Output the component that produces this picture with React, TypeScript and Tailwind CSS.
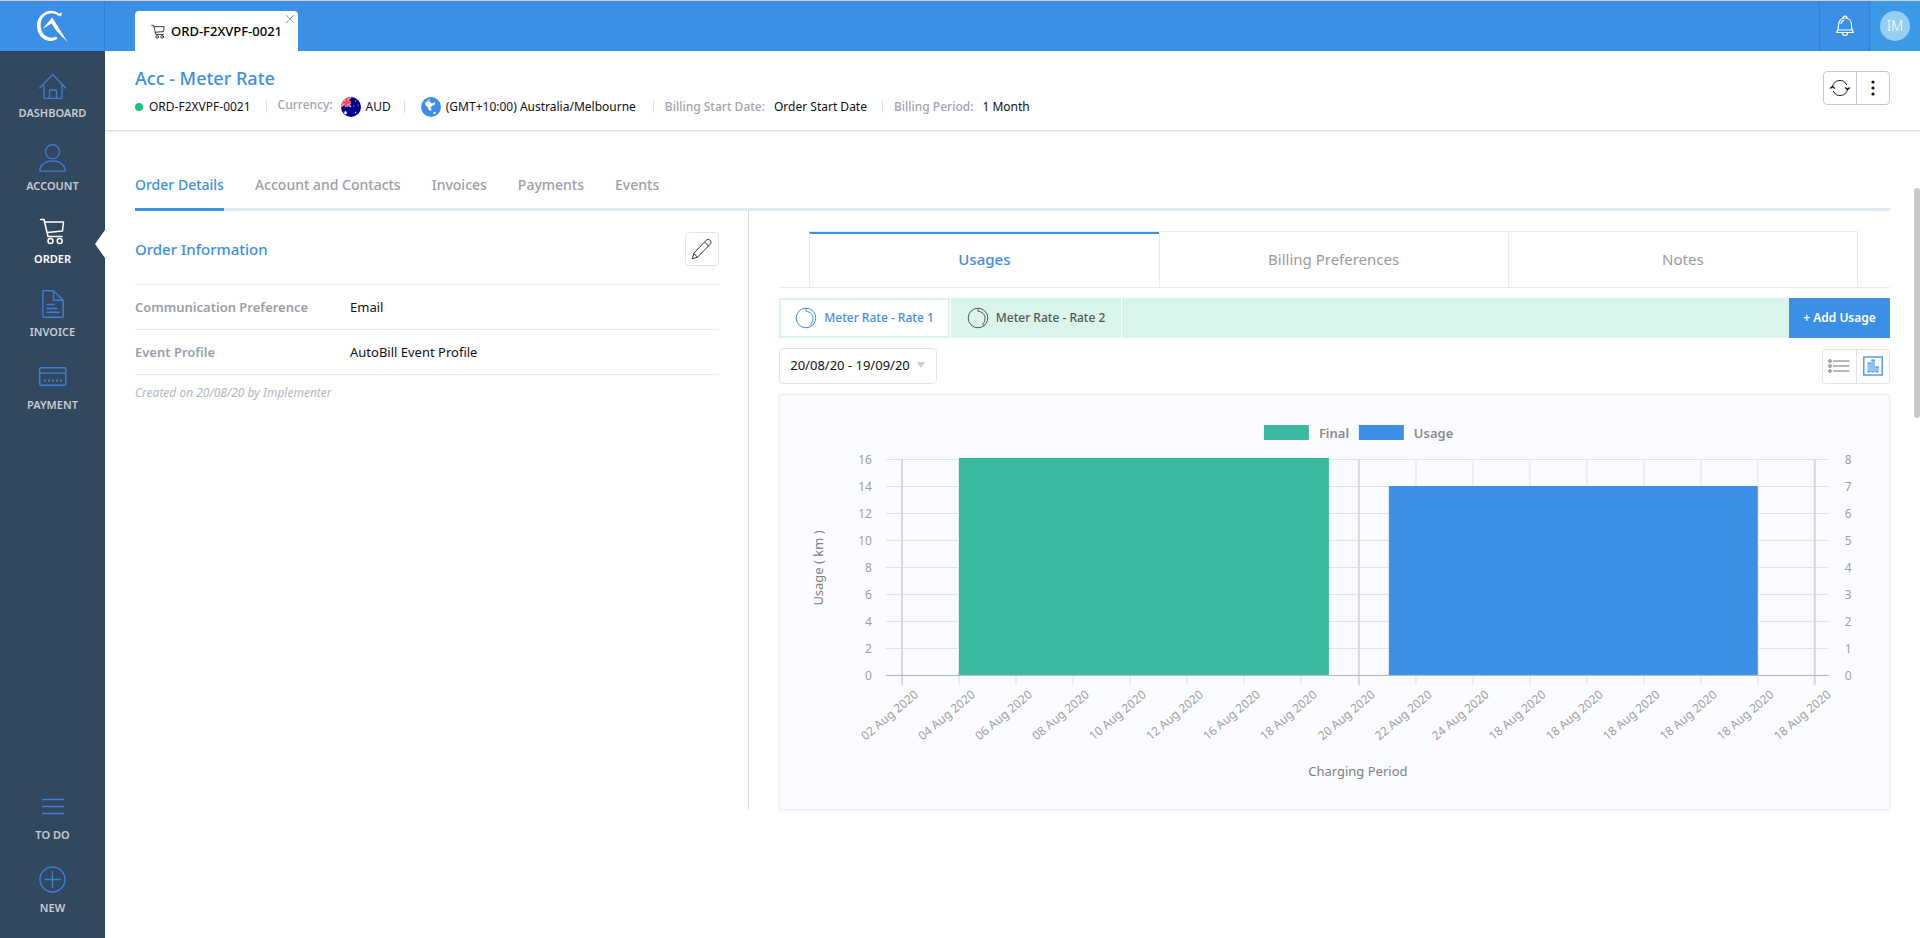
import { useState } from 'react';
import type { ReactNode } from 'react';

const BLUE = '#3c8fe6';

function HouseIcon() {
  return (
    <svg width="28" height="28" viewBox="0 0 28 28" fill="none" stroke="currentColor" strokeWidth="1.3" strokeLinecap="round" strokeLinejoin="round">
      <path d="M.7 17 13.700 3.500 26.700 17M5 14V26a1.500 1.500 0 0 0 1.500 1.500h15A1.500 1.500 0 0 0 23 26V14M10.500 27.500V20a1 1 0 0 1 1-1h5a1 1 0 0 1 1 1v7.500" />
    </svg>
  );
}

function PersonIcon() {
  return (
    <svg width="28" height="28" viewBox="0 0 28 28" fill="none" stroke="currentColor" strokeWidth="1.3">
      <circle cx="13.500" cy="7.700" r="7" />
      <path d="M2 27.200h23a1.200 1.200 0 0 0 1.200-1.300C25.500 20.200 20 16.900 13.500 16.900S1.500 20.200.8 25.900A1.200 1.200 0 0 0 2 27.200z" />
    </svg>
  );
}

function CartIcon({ size = 28, width = 1.5 }: { size?: number; width?: number }) {
  return (
    <svg width={size} height={size} viewBox="0 0 28 28" fill="none" stroke="currentColor" strokeWidth={width} strokeLinecap="round" strokeLinejoin="round">
      <path d="M1.500 2.500H5L9 19.500H23M5.700 5H24.500L23.500 14 8 15.500" />
      <circle cx="11.500" cy="24" r="2.500" />
      <circle cx="20.700" cy="24" r="2.500" />
    </svg>
  );
}

function DocumentIcon() {
  return (
    <svg width="28" height="28" viewBox="0 0 28 28" fill="none" stroke="currentColor" strokeWidth="1.400" strokeLinejoin="round">
      <path d="M14.500 .8H5A1.200 1.200 0 0 0 3.800 2v24A1.200 1.200 0 0 0 5 27.200h18a1.200 1.200 0 0 0 1.200-1.200V10.200zV10.200h9.700M7.500 14.500h8M7.500 18.500h11M7.500 22.300h13" />
    </svg>
  );
}

function CardIcon() {
  return (
    <svg width="28" height="28" viewBox="0 0 28 28" fill="none" stroke="currentColor" strokeWidth="1.400">
      <rect x=".8" y="4.700" width="26" height="17.500" rx="1" />
      <path d="M1 10h26" />
      <path d="M5 17.500h18" strokeWidth="2" strokeDasharray="2 2" />
    </svg>
  );
}

function LinesIcon() {
  return (
    <svg width="28" height="28" viewBox="0 0 28 28" fill="none" stroke="currentColor" strokeWidth="1.400">
      <path d="M3 6.500h22M3 13.500h22M3 20.500h22" />
    </svg>
  );
}

function PlusIcon() {
  return (
    <svg width="28" height="28" viewBox="0 0 28 28" fill="none" stroke="currentColor" strokeWidth="1.400">
      <circle cx="13.500" cy="13.500" r="12.500" />
      <path d="M5 13.500h17M13.500 5v17" />
    </svg>
  );
}

function LogoIcon() {
  return (
    <svg width="34" height="34" viewBox="0 0 34 34" fill="none">
      <path d="M26 7.500 27 3.500 24 4.500C20 1.200 14.500 .8 10 3.200 4.500 6.200 1.500 11.500 2 18c.6 8.500 7 14 13.500 14 3 0 5.500-1 7-2.800l-1.500-1.700C19 28.500 17.500 29 15 28.500 10 27.700 6 23.500 5.700 17.500 5.300 12 7.500 7.500 12 5.300c3.700-1.800 8-1.500 11 1.200z" fill="#fff" />
      <path d="M7.500 20 17.200 8.500 32.500 33 21.500 22 16.500 14.500z" fill="#fff" />
    </svg>
  );
}

function BellIcon() {
  return (
    <svg width="20" height="22" viewBox="0 0 20 22" fill="none" stroke="#fff" strokeWidth="1.200" strokeLinejoin="round">
      <path d="M8 3a2 1.800 0 0 1 4 0M1 17.500h18M1.500 17c2-1.500 2-3.500 2-7C3.500 5.500 6.500 3 10 3s6.500 2.500 6.500 7c0 3.500 0 5.500 2 7M3 15h14M7.500 18a2.500 2.500 0 0 0 5 0M6 9c.2-2.300 1.500-3.500 3.200-3.700" />
    </svg>
  );
}

function FlagIcon() {
  return (
    <svg width="20" height="20" viewBox="0 0 20 20">
      <defs>
        <clipPath id="flag-round">
          <circle cx="10" cy="10" r="10" />
        </clipPath>
      </defs>
      <g clipPath="url(#flag-round)">
        <rect width="20" height="20" fill="#00008b" />
        <path d="M0 0 10 10M10 0 0 10" stroke="#f3b6c4" strokeWidth="1.600" />
        <path d="M5.500 0v10M0 5.500h10" stroke="#ff8f96" strokeWidth="3.600" />
        <path d="M5.500 0v10M0 5.500h10" stroke="#ff4048" strokeWidth="2" />
        <g fill="#e6e6ff">
          <path d="m4.500 13.500.6 1.200 1.300-.2-.7 1.200.7 1.200-1.300-.2-.6 1.200-.5-1.200-1.400.2.800-1.200-.800-1.200 1.400.2z" />
          <circle cx="14.500" cy="4" r=".6" />
          <circle cx="17" cy="8" r=".6" />
          <circle cx="12.500" cy="9" r=".6" />
          <circle cx="14.500" cy="15.500" r=".7" />
        </g>
      </g>
    </svg>
  );
}

function GlobeIcon() {
  return (
    <svg width="20" height="20" viewBox="0 0 20 20">
      <circle cx="10" cy="10" r="10" fill={BLUE} />
      <path d="M4 5.500 6.500 4l3 .7 1 1.800L12.500 6l1.700-1.500L13.500 8l-2.500.800L9.500 11l1.200 1.500-1 1.500L7.500 12.700l-.8-2.700L4.500 8.500zM12 15.700l3-.9-1 2.300h-1.500zM6 3.200 8.500 2l.5 1.500z" fill="#fff" />
    </svg>
  );
}

function RefreshIcon() {
  return (
    <svg width="20" height="18" viewBox="0 0 20 18" fill="none" stroke="#1c1c1c" strokeWidth="1">
      <path d="M2.500 8A7.500 7.500 0 0 1 16.800 6M17.500 10A7.500 7.500 0 0 1 3.200 12" />
      <path d="m.3 9.500 2.200-2 2.200 2M15.300 8.500l2.200 2 2.200-2" strokeWidth="1.500" />
    </svg>
  );
}

function DotsIcon() {
  return (
    <svg width="4" height="16" viewBox="0 0 4 16" fill="#111">
      <circle cx="2" cy="2" r="1.600" />
      <circle cx="2" cy="8" r="1.600" />
      <circle cx="2" cy="14" r="1.600" />
    </svg>
  );
}

function PencilIcon() {
  return (
    <svg width="22" height="22" viewBox="0 0 22 22" fill="none" stroke="#333" strokeWidth="1" strokeLinejoin="round">
      <path d="m1.200 20.800 1.600-5.500L15.200 2.200c1.200-1.200 2.800-1.100 3.900 0s1.300 2.800.1 4L6.500 19.200zM13.500 4l4.200 4.200M2.800 15.300l3.700 3.900" />
    </svg>
  );
}

function DialIcon() {
  return (
    <svg width="22" height="22" viewBox="0 0 22 22" fill="none" stroke="currentColor" strokeWidth="1">
      <circle cx="11" cy="11" r="9.800" />
      <path d="M11 1.200V4.300c4.200.3 7 3.200 7 6.900 0 2.800-1 4.800-2.500 6.300l1.700 1.200" />
    </svg>
  );
}

function ListIcon() {
  return (
    <svg width="22" height="14" viewBox="0 0 22 14" fill="none" stroke="#777" strokeWidth="1.100">
      <path d="M5 2h16.500M5 7h16.500M5 12h16.500" />
      <circle cx="2" cy="2" r="1.200" />
      <circle cx="2" cy="7" r="1.200" />
      <circle cx="2" cy="12" r="1.200" />
    </svg>
  );
}

function BarsIcon() {
  return (
    <svg width="20" height="20" viewBox="0 0 20 20" fill="none" stroke={BLUE} strokeWidth="1.300">
      <rect x=".8" y="1" width="18.400" height="18" />
      <path d="M4.500 16V7h3.800v9zM8.300 16V4h3.800v12zM12.100 16v-5h3.800v5z" fill="#93c1f1" stroke="none" />
      <path d="M4.500 7h3.800M8.300 4h3.800M12.100 11h3.800" strokeWidth="1" />
      <path d="M4.500 16h11.400" strokeWidth="1" strokeDasharray="2.500 1.500" />
    </svg>
  );
}

const mainNav = [
  { label: 'DASHBOARD', icon: <HouseIcon /> },
  { label: 'ACCOUNT', icon: <PersonIcon /> },
  { label: 'ORDER', icon: <CartIcon />, active: true },
  { label: 'INVOICE', icon: <DocumentIcon /> },
  { label: 'PAYMENT', icon: <CardIcon /> },
];

const bottomNav = [
  { label: 'TO DO', icon: <LinesIcon /> },
  { label: 'NEW', icon: <PlusIcon /> },
];

function NavItem({ label, icon, active }: { label: string; icon: ReactNode; active?: boolean }) {
  return (
    <a href="#" className={`relative flex h-[73px] flex-col items-center pt-[9px] ${active ? 'text-white' : 'text-[#3c7fd8]'}`}>
      {icon}
      <span className={`mt-1.5 text-[11px] leading-4 font-semibold ${active ? 'text-white' : 'text-[#c5cbd2]'}`}>{label}</span>
      {active && (
        <svg className="absolute top-[22px] right-0" width="10" height="28" viewBox="0 0 10 28" fill="#fff">
          <path d="M10 0 0 14l10 14z" />
        </svg>
      )}
    </a>
  );
}

function Divider() {
  return <span className="h-3 w-px bg-[#dcdce4]" />;
}

const pageTabs = ['Order Details', 'Account and Contacts', 'Invoices', 'Payments', 'Events'];
const usageTabs = ['Usages', 'Billing Preferences', 'Notes'];
const meters = ['Meter Rate - Rate 1', 'Meter Rate - Rate 2'];

const dates = ['02', '04', '06', '08', '10', '12', '16', '18', '20', '22', '24', '18', '18', '18', '18', '18', '18'];

function UsageChart() {
  const left = 122;
  const right = 1035;
  const top = 64;
  const bottom = 280;
  const x = (i: number) => Math.round(left + ((right - left) / 16) * i);
  const y = (i: number) => bottom - 27 * i;
  const rows = [0, 1, 2, 3, 4, 5, 6, 7, 8];

  return (
    <svg viewBox="0 0 1109 414" className="block w-full" role="img" aria-label="Usage by charging period">
      <rect x="484" y="30" width="45" height="15" fill="#3bb8a0" />
      <rect x="579" y="30" width="45" height="15" fill={BLUE} />
      <g fontSize="13" fontWeight="600" fill="#8c8c8c">
        <text x="539" y="43">Final</text>
        <text x="634" y="43">Usage</text>
      </g>
      {rows.slice(1).map((r) => (
        <rect key={r} x="106" y={y(r)} width="943" height="1" fill="#e0e2e6" />
      ))}
      {dates.map((_, i) => (
        <rect key={i} x={x(i) - 1} y={top} width="2" height={bottom - top + 10} fill={i % 8 === 0 ? '#d6d8dc' : '#ebedf1'} />
      ))}
      <rect x="106" y={bottom} width="943" height="1" fill="#b0b2b6" />
      <rect x="179" y="63" width="370" height="217" fill="#3bb8a0" />
      <rect x="609" y="91" width="369" height="189" fill={BLUE} />
      <g fontSize="12" fill="#9f9f9f">
        {rows.map((r) => (
          <text key={r} x="92" y={y(r) + 5} textAnchor="end">{r * 2}</text>
        ))}
        {rows.map((r) => (
          <text key={r} x="1065" y={y(r) + 5}>{r}</text>
        ))}
        {dates.map((d, i) => (
          <text key={i} x={x(i) + 17} y="301" textAnchor="end" transform={`rotate(-40 ${x(i) + 17} 301)`}>{d} Aug 2020</text>
        ))}
      </g>
      <g fontSize="13" fill="#808080" textAnchor="middle">
        <text x="43" y="173" transform="rotate(-90 43 173)">Usage ( km )</text>
        <text x="578" y="381">Charging Period</text>
      </g>
    </svg>
  );
}

export default function App() {
  const [tab, setTab] = useState('Order Details');
  const [usageTab, setUsageTab] = useState('Usages');
  const [meter, setMeter] = useState(meters[0]);

  return (
    <div className="flex min-h-screen flex-col bg-white font-['Noto_Sans','Open_Sans',sans-serif] text-[#111]">
      <header className="flex h-[51px] border-t border-[#d0d0d0] bg-[#3c8fe6]">
        <a href="#" aria-label="Home" className="flex w-[105px] items-center justify-center border-r border-[#377fd0]">
          <LogoIcon />
        </a>
        <div className="flex flex-1 items-end pl-[30px]">
          <div className="relative flex h-10 items-center gap-[5px] rounded-t bg-white px-4">
            <CartIcon size={15} width={1.5} />
            <a href="#" className="text-[13px] leading-5 font-medium text-black">ORD-F2XVPF-0021</a>
            <button aria-label="Close tab" className="absolute top-1 right-1">
              <svg width="8" height="8" viewBox="0 0 8 8" stroke="#999" strokeWidth="1">
                <path d="m0 0 8 8M8 0 0 8" />
              </svg>
            </button>
          </div>
        </div>
        <button aria-label="Notifications" className="flex w-[51px] items-center justify-center border-x border-[#377fd0]">
          <BellIcon />
        </button>
        <button className="flex w-[50px] items-center justify-center bg-[#3a9ae6]">
          <span className="size-[30px] rounded-full bg-[#97cff3] text-sm leading-[30px] font-light text-white">IM</span>
        </button>
      </header>

      <div className="flex flex-1">
        <nav className="flex w-[105px] shrink-0 flex-col justify-between bg-[#32485e] pt-[11px] pb-2">
          <div>
            {mainNav.map((item) => (
              <NavItem key={item.label} {...item} />
            ))}
          </div>
          <div>
            {bottomNav.map((item) => (
              <NavItem key={item.label} {...item} />
            ))}
          </div>
        </nav>

        <main className="min-w-0 flex-1">
          <section className="flex h-20 items-start justify-between border-b border-[#d5dce3] px-[30px] shadow-[0_1px_3px_rgba(0,0,0,0.08)]">
            <div className="pt-[15px]">
              <h1 className="text-lg leading-6 font-medium text-[#3c8fe6]">Acc - Meter Rate</h1>
              <div className="mt-[7px] flex h-5 items-center text-xs">
                <span className="mr-1.5 size-2 rounded-full bg-[#12c878]" />
                <span className="mr-[15px]">ORD-F2XVPF-0021</span>
                <Divider />
                <span className="mr-2 ml-[11px] pb-1 font-medium text-[#a3a3b2]">Currency:</span>
                <FlagIcon />
                <span className="mr-[13px] ml-[5px]">AUD</span>
                <Divider />
                <span className="mr-[5px] ml-4">
                  <GlobeIcon />
                </span>
                <span className="mr-[17px]">(GMT+10:00) Australia/Melbourne</span>
                <Divider />
                <span className="mr-[9px] ml-[11px] font-medium text-[#a3a3b2]">Billing Start Date:</span>
                <span className="mr-[15px]">Order Start Date</span>
                <Divider />
                <span className="mr-[9px] ml-[11px] font-medium text-[#a3a3b2]">Billing Period:</span>
                <span>1 Month</span>
              </div>
            </div>
            <div className="mt-5 flex h-[34px] w-[67px] rounded border border-[#c3c6d4]">
              <button aria-label="Refresh" className="flex flex-1 items-center justify-center border-r border-[#c3c6d4]">
                <RefreshIcon />
              </button>
              <button aria-label="More actions" className="flex flex-1 items-center justify-center">
                <DotsIcon />
              </button>
            </div>
          </section>

          <div className="px-[30px] pt-11">
            <div className="flex gap-[31px] border-b-3 border-[#e3e9f4]">
              {pageTabs.map((name) => (
                <button
                  key={name}
                  onClick={() => setTab(name)}
                  className={`-mb-[3px] border-b-3 pb-[13px] text-sm leading-5 font-medium ${tab === name ? 'border-[#3c8fe6] text-[#3c8fe6]' : 'border-transparent text-[#9aa0a8]'}`}
                >
                  {name}
                </button>
              ))}
            </div>

            <div className="flex">
              <section className="w-[35%] shrink-0 border-r border-[#d3dae3] pt-[21px] pr-[29px]">
                <div className="flex items-center justify-between border-b border-[#eaeaea] pb-[18px]">
                  <h2 className="text-[15px] font-medium text-[#3c8fe6]">Order Information</h2>
                  <button aria-label="Edit order information" className="flex size-[34px] items-center justify-center rounded-sm border border-[#e4e4e4]">
                    <PencilIcon />
                  </button>
                </div>
                <dl className="text-[13px]">
                  <div className="flex h-[45px] items-center border-b border-[#eaeaea] pt-0.5">
                    <dt className="w-[215px] font-semibold text-[#9a9ea8]">Communication Preference</dt>
                    <dd>Email</dd>
                  </div>
                  <div className="flex h-[45px] items-center border-b border-[#eaeaea] pt-0.5">
                    <dt className="w-[215px] font-semibold text-[#9a9ea8]">Event Profile</dt>
                    <dd>AutoBill Event Profile</dd>
                  </div>
                </dl>
                <p className="mt-2.5 text-xs leading-4 text-[#b2b7be] italic">Created on 20/08/20 by Implementer</p>
              </section>

              <section className="min-w-0 flex-1 pt-5 pl-[30px]">
                <div className="border-b border-[#eaeaea] pr-8 pl-[30px]">
                  <div className="grid h-14 grid-cols-3 border-t border-r border-[#eaeaea]">
                    {usageTabs.map((name) => (
                      <button
                        key={name}
                        onClick={() => setUsageTab(name)}
                        className={`border-t-2 border-l border-l-[#eaeaea] pb-0.5 text-[15px] ${usageTab === name ? 'border-t-[#3c8fe6] font-medium text-[#3c8fe6]' : 'border-t-transparent text-[#9a9a9a]'}`}
                      >
                        {name}
                      </button>
                    ))}
                  </div>
                </div>

                <div className="mt-2.5 flex h-10 bg-[#daf5eb]">
                  {meters.map((name) => (
                    <div key={name} className="border-r border-white">
                      <button
                        onClick={() => setMeter(name)}
                        className={`flex h-10 items-center gap-[7px] border-2 border-[#daf5eb] px-3.5 text-xs ${meter === name ? 'bg-white font-medium text-[#3c8fe6]' : 'font-medium text-[#555]'}`}
                      >
                        <DialIcon />
                        {name}
                      </button>
                    </div>
                  ))}
                  <button className="ml-auto w-[101px] bg-[#3c8fe6] text-xs font-semibold text-white">+ Add Usage</button>
                </div>

                <div className="mt-2.5 flex items-center justify-between">
                  <div className="relative">
                    <select aria-label="Billing period" className="h-9 w-[158px] appearance-none rounded-sm border border-[#e4e4e4] bg-white pl-2.5 text-[13px]">
                      <option>20/08/20 - 19/09/20</option>
                    </select>
                    <svg className="pointer-events-none absolute top-3.5 right-3" width="8" height="6" viewBox="0 0 8 6" fill="#ccc">
                      <path d="M0 0h8L4 6z" />
                    </svg>
                  </div>
                  <div className="flex h-[35px] w-[68px] rounded-sm border border-[#dfe2e8]">
                    <button aria-label="List view" className="flex flex-1 items-center justify-center border-r border-[#dfe2e8]">
                      <ListIcon />
                    </button>
                    <button aria-label="Chart view" className="flex flex-1 items-center justify-center">
                      <BarsIcon />
                    </button>
                  </div>
                </div>

                <div className="mt-2.5 border border-[#eceef0] bg-[#fbfcff] shadow-[0_1px_3px_rgba(0,0,0,0.06)]">
                  <UsageChart />
                </div>
              </section>
            </div>
          </div>
        </main>
      </div>

      <div className="fixed top-[188px] right-0 h-[230px] w-1.5 rounded-full bg-[#c9c9c9]" />
    </div>
  );
}
